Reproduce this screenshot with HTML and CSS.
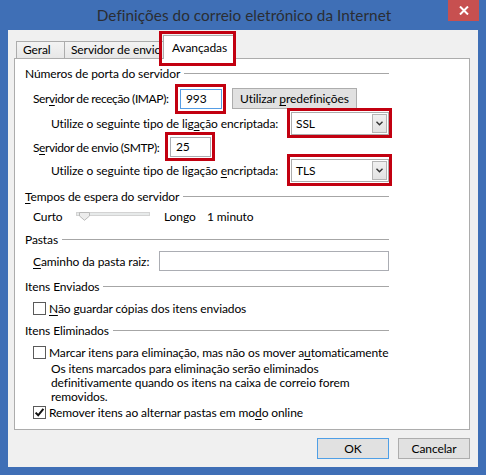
FILE: index.html
```html
<!DOCTYPE html>
<html lang="pt">
<head>
<meta charset="utf-8">
<title>Definições do correio eletrónico da Internet</title>
<link rel="stylesheet" href="styles.css">
</head>
<body>
<div class="window">
  <div class="titlebar">
    <div class="title">Definições do correio eletrónico da Internet</div>
    <div class="close">
      <svg width="10" height="9" viewBox="0 0 10 9"><path d="M1 0.5 L9 8.5 M9 0.5 L1 8.5" stroke="#fff" stroke-width="2" fill="none"/></svg>
    </div>
  </div>
  <div class="client">
    <div class="tabs">
      <div class="tab t-geral">Geral</div>
      <div class="tab t-serv">Servidor de envio</div>
      <div class="tab selected mark mk-tab">Avançadas</div>
    </div>
    <div class="panel">
      <div class="group">Números de porta do servidor</div>

      <div class="row ind1 mt7 h21">
        <span class="lbl w-imap tight">Ser<u>v</u>idor de receção (IMAP):</span>
        <span class="mark mk-993"><span class="textbox focus w-port1">993</span></span>
        <span class="btn w-pre"><span>Utilizar <u>p</u>redefinições</span></span>
      </div>

      <div class="row ind2 mt3 h23">
        <span class="lbl w-enc">Utilize o seguinte tipo de lig<u>a</u>ção encriptada:</span>
        <span class="mark mk-ssl">
          <span class="combo"><span class="combo-text">SSL</span><span class="combo-btn"><svg width="7" height="5" viewBox="0 0 7 5"><path d="M0.5 0.8 L3.5 3.8 L6.5 0.8" stroke="#333" stroke-width="1.4" fill="none"/></svg></span></span>
        </span>
      </div>

      <div class="row ind1 mt2 h20">
        <span class="lbl w-smtp tight">S<u>e</u>rvidor de envio (SMTP):</span>
        <span class="mark mk-25"><span class="textbox w-port2">25</span></span>
      </div>

      <div class="row ind2 mt2 h23">
        <span class="lbl w-enc">Utilize o seguinte tipo de ligação <u>e</u>ncriptada:</span>
        <span class="mark mk-tls">
          <span class="combo"><span class="combo-text">TLS</span><span class="combo-btn"><svg width="7" height="5" viewBox="0 0 7 5"><path d="M0.5 0.8 L3.5 3.8 L6.5 0.8" stroke="#333" stroke-width="1.4" fill="none"/></svg></span></span>
        </span>
      </div>

      <div class="group mt6"><span><u>T</u>empos de espera do servidor</span></div>

      <div class="row ind1 mt4 h16">
        <span class="w-curto">Curto</span>
        <span class="slider">
          <span class="track"></span>
          <svg class="thumb" width="11" height="9" viewBox="0 0 11 9"><path d="M0.5 0.5 H10.5 V4 L5.5 8.3 L0.5 4 Z" fill="#ececec" stroke="#b9b9b9" stroke-width="1"/></svg>
        </span>
        <span class="w-longo">Longo</span>
        <span>1 minuto</span>
      </div>

      <div class="group mt7">Pastas</div>

      <div class="row ind1 mt4 h20">
        <span class="lbl w-path"><u>C</u>aminho da pasta raiz:</span>
        <span class="textbox w-pathbox"></span>
      </div>

      <div class="group mt7">Itens Enviados</div>

      <div class="row ind1 mt6 h16">
        <span class="check"></span>
        <span><u>N</u>ão guardar cópias dos itens enviados</span>
      </div>

      <div class="group mt6">Itens Eliminados</div>

      <div class="row ind1 mt6 h16">
        <span class="check"></span>
        <span>Marcar itens para eliminação, mas não os mover a<u>u</u>tomaticamente</span>
      </div>

      <p class="desc">Os itens marcados para eliminação serão eliminados<br>definitivamente quando os itens na caixa de correio forem<br>removidos.</p>

      <div class="row ind1 h16">
        <span class="check checked"><svg width="11" height="11" viewBox="0 0 11 11"><path d="M1.6 5.6 L4.2 8.3 L9.4 1.8" stroke="#111" stroke-width="2" fill="none"/></svg></span>
        <span>Remover itens ao alternar pastas em mo<u>d</u>o online</span>
      </div>
    </div>
    <div class="actions">
      <span class="btn default w-dlg"><span>OK</span></span>
      <span class="btn w-dlg"><span>Cancelar</span></span>
    </div>
  </div>
</div>
</body>
</html>
```
FILE: styles.css
```css
* { box-sizing: border-box; }
html, body { margin: 0; padding: 0; }
body {
  font-family: Lato, "Liberation Sans", sans-serif;
  font-size: 12px;
  letter-spacing: -0.1px;
  color: #000;
  background: #3f6fb6;
}
u { text-decoration: underline; text-underline-offset: 2px; }

.window {
  width: 486px;
  height: 475px;
  background: #3f6fb6;
  display: flex;
  flex-direction: column;
  padding: 0 8px 8px;
}

.titlebar {
  height: 30px;
  display: flex;
  align-items: flex-start;
  margin: 0 -8px;
  flex: none;
}
.title {
  flex: 1;
  text-align: center;
  padding-left: 40px;
  line-height: 30px;
  font-size: 15.3px;
  letter-spacing: 0.05px;
  color: #2a2d33;
  white-space: nowrap;
}
.close {
  width: 31px;
  height: 21px;
  margin-right: 7px;
  background: #c75050;
  display: flex;
  align-items: center;
  justify-content: center;
}

.client {
  flex: 1;
  background: #f0f0f0;
  padding: 5px 8px 0 6px;
  display: flex;
  flex-direction: column;
}

.tabs {
  display: flex;
  align-items: flex-end;
  height: 23px;
  padding-left: 2px;
  position: relative;
  z-index: 1;
}
.tab {
  height: 17px;
  border: 1px solid #acacac;
  border-bottom: none;
  background: linear-gradient(#f3f3f3, #e7e7e7);
  padding: 0 6px;
  line-height: 16px;
  white-space: nowrap;
  overflow: hidden;
}
.tab + .tab { margin-left: -1px; }
.t-geral { width: 49px; }
.t-serv { width: 100px; }
.tab.selected {
  width: 71px;
  height: 24px;
  background: #fff;
  margin-bottom: -1px;
  padding: 4px 0 0 8px;
  overflow: visible;
  position: relative;
  z-index: 2;
}

.panel {
  height: 372px;
  background: #fff;
  border: 1px solid #acacac;
  padding: 6px 80px 0 10px;
  flex: none;
}

.group {
  display: flex;
  align-items: center;
  height: 16px;
  white-space: nowrap;
}
.group::after {
  content: "";
  flex: 1;
  border-top: 1px solid #a6a6a6;
  margin-left: 4px;
}

.row { display: flex; align-items: center; white-space: nowrap; }
.ind1 { padding-left: 8px; }
.ind2 { padding-left: 26px; }
.h16 { height: 16px; }
.h20 { height: 20px; }
.h21 { height: 21px; }
.h23 { height: 23px; }
.mt2 { margin-top: 2px; }
.mt3 { margin-top: 3px; }
.mt4 { margin-top: 4px; }
.mt6 { margin-top: 6px; }
.mt7 { margin-top: 7px; }

.lbl { flex: none; }
.tight { letter-spacing: -0.4px; }
.w-imap { width: 147px; }
.w-smtp { width: 137px; }
.w-enc { width: 240px; }
.w-path { width: 126px; }

.textbox {
  display: block;
  height: 20px;
  background: #fff;
  border: 1px solid #abadb3;
  padding: 0 5px;
  line-height: 18px;
}
.textbox.focus { border-color: #569de5; }
.w-port1 { width: 42px; }
.w-port2 { width: 41px; }
.w-pathbox { width: 230px; }

.btn {
  display: flex;
  align-items: center;
  justify-content: center;
  height: 21px;
  background: #e1e1e1;
  border: 1px solid #adadad;
  white-space: nowrap;
}
.btn.default { border-color: #4f9fe6; }
.w-pre { width: 125px; margin-left: 10px; }
.w-dlg { width: 72px; }

.combo {
  display: flex;
  align-items: center;
  width: 98px;
  height: 23px;
  background: #fff;
  border: 1px solid #acacac;
  padding: 0 1px 0 4px;
}
.combo-text { flex: 1; }
.combo-btn {
  width: 15px;
  height: 19px;
  background: linear-gradient(#f0f0f0, #e3e3e3);
  border: 1px solid #b5b5b5;
  display: flex;
  align-items: center;
  justify-content: center;
}

.mark { position: relative; display: block; }
.mark::after {
  content: "";
  position: absolute;
  border: 3px solid #c20010;
  pointer-events: none;
}
.mk-tab::after { left: -5px; right: -3px; top: -5px; bottom: -7px; }
.mk-993::after { left: -5px; right: -4px; top: -5px; bottom: -5px; }
.mk-ssl::after { left: -4px; right: -3px; top: -4px; bottom: -3px; }
.mk-25::after { left: -5px; right: -4px; top: -5px; bottom: -4px; }
.mk-tls::after { left: -4px; right: -3px; top: -5px; bottom: -4px; }

.w-curto { width: 43px; }
.slider {
  position: relative;
  width: 74px;
  height: 16px;
}
.track {
  display: block;
  margin-top: 4px;
  height: 4px;
  background: #e7eaea;
  border: 1px solid #d3d3d3;
}
.thumb { position: absolute; left: 3px; top: 4px; }
.w-longo { width: 43px; margin-left: 14px; }

.check {
  flex: none;
  width: 13px;
  height: 13px;
  border: 1px solid #5a5a5a;
  background: #fff;
  margin-right: 3px;
  display: flex;
  align-items: center;
  justify-content: center;
}

.desc {
  margin: 2px 0 0;
  padding-left: 26px;
  line-height: 14px;
  white-space: nowrap;
}

.actions {
  display: flex;
  justify-content: flex-end;
  gap: 9px;
  margin-top: 8px;
}
```
